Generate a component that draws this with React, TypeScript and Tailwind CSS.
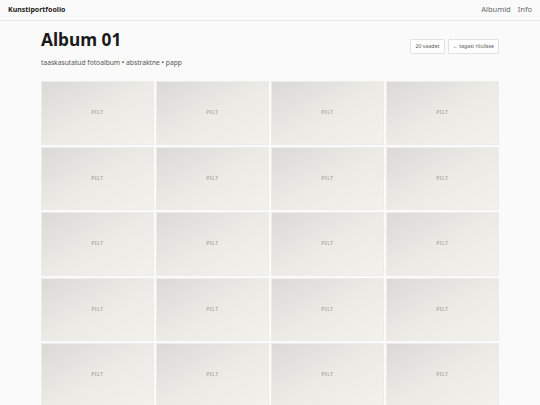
import React from "react"

const pictures = Array.from({ length: 20 }, (_, i) => i + 1)

export default function App() {
  return (
    <div className="min-h-screen bg-[#fafafa] text-[#1a1a1a] font-['Noto_Sans',sans-serif]">
      <header className="flex h-[21px] items-center justify-between border-b border-[#e8e8e8] px-2">
        <span className="text-[7px] font-bold">Kunstiportfoolio</span>
        <nav className="flex gap-[7px] text-[7.5px] text-[#666]">
          <a>Albumid</a>
          <a>Info</a>
        </nav>
      </header>

      <main className="px-[41px]">
        <div className="flex items-start justify-between pt-[7px]">
          <div>
            <h1 className="text-[17.3px] font-bold leading-[24px]">Album 01</h1>
            <p className="mt-[5.5px] text-[6.7px] leading-[9px] text-[#555]">taaskasutatud fotoalbum • abstraktne • papp</p>
          </div>
          <div className="mt-[10.5px] flex gap-[3px] text-[5.2px] leading-[7px] text-[#555]">
            <span className="rounded-[2px] border border-[#e2e2e2] bg-white px-[4.5px] py-[3px]">20 vaadet</span>
            <span className="rounded-[2px] border border-[#e2e2e2] bg-white px-[4px] py-[3px]">← tagasi riiulisse</span>
          </div>
        </div>

        <div className="mt-[14.5px] grid grid-cols-4 gap-[2px]">
          {pictures.map((n) => (
            <div
              key={n}
              className="flex aspect-video items-center justify-center border border-[#ececea] bg-gradient-to-br from-[#dad9d5] via-[#eceae5] to-[#f3f1ec]"
            >
              <span className="text-[5px] font-semibold tracking-[0.1em] text-[#a8a8a6]">PILT</span>
            </div>
          ))}
        </div>
      </main>
    </div>
  )
}
